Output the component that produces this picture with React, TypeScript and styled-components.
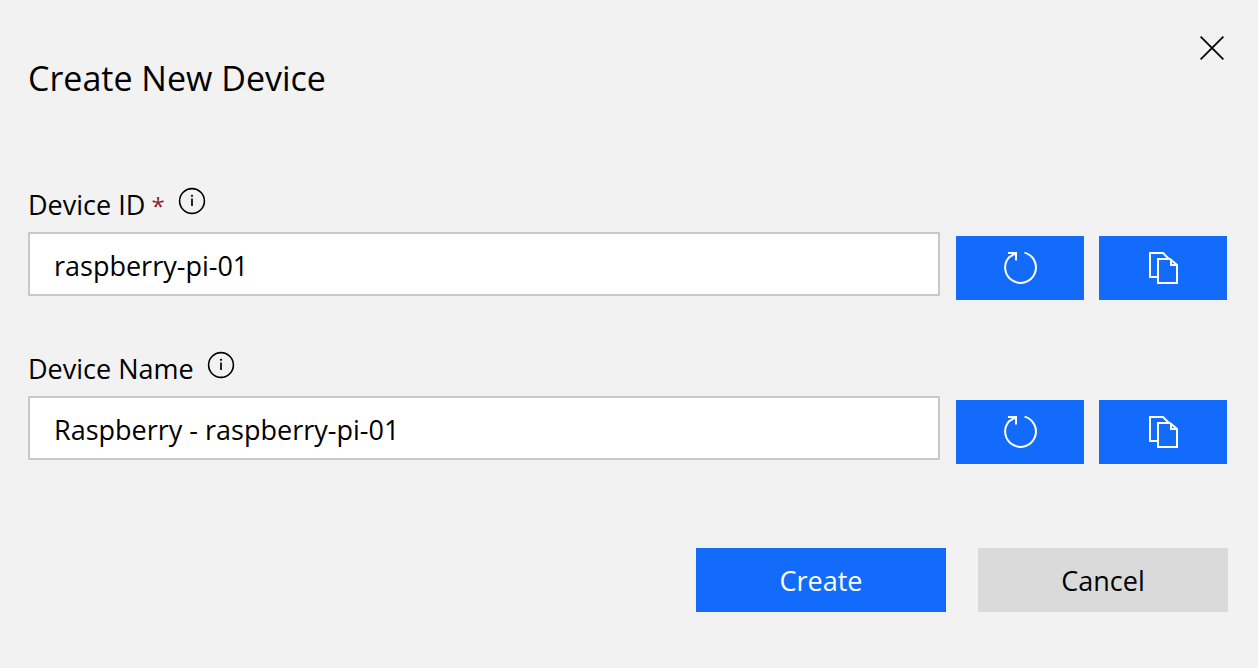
import React, { useState } from "react";
import styled, { createGlobalStyle } from "styled-components";

const GlobalStyle = createGlobalStyle`
  *, *::before, *::after { box-sizing: border-box; }
  body {
    margin: 0;
    background: #f2f2f2;
    color: #000;
    font-family: "Segoe UI", "Open Sans", "Noto Sans", sans-serif;
  }
`;

const Panel = styled.form`
  min-height: 100vh;
  padding: 28px 30px 56px 28px;
  background: #f2f2f2;
`;

const Header = styled.header`
  display: flex;
  justify-content: space-between;
  align-items: flex-start;
`;

const Title = styled.h1`
  margin: 26px 0 0;
  font-size: 34px;
  line-height: 48px;
  font-weight: 400;
`;

const PlainButton = styled.button`
  display: flex;
  align-items: center;
  justify-content: center;
  padding: 0;
  border: 0;
  background: none;
  color: inherit;
  cursor: pointer;
`;

const CloseButton = styled(PlainButton)`
  width: 32px;
  height: 40px;
`;

const Fields = styled.div`
  display: grid;
  gap: 48px;
  margin-top: 82px;
`;

const LabelRow = styled.div`
  display: flex;
  gap: 13px;
  height: 48px;
`;

const Label = styled.label`
  font-size: 27px;
  line-height: 42px;
`;

const Required = styled.span`
  color: #8e1a3a;
  font-size: 24px;
  line-height: 1;
`;

const InfoButton = styled(PlainButton)`
  width: 28px;
  height: 34px;
`;

const ControlRow = styled.div`
  display: flex;
  gap: 16px;
`;

const TextInput = styled.input`
  flex: 1;
  min-width: 0;
  height: 64px;
  padding: 2px 24px 0;
  border: 2px solid #c8c8c8;
  border-radius: 0;
  background: #fff;
  color: #000;
  font: inherit;
  font-size: 27px;
`;

const Actions = styled.div`
  display: flex;
  flex: 0 0 272px;
  gap: 15px;
  padding-top: 4px;
`;

const IconButton = styled(PlainButton)`
  width: 128px;
  height: 64px;
  background: #136bfb;
  color: #fff;
`;

const Footer = styled.footer`
  display: flex;
  justify-content: flex-end;
  gap: 32px;
  margin-top: 84px;
`;

const FooterButton = styled(PlainButton)<{ $primary?: boolean }>`
  width: 250px;
  height: 64px;
  background: ${({ $primary }) => ($primary ? "#136bfb" : "#dadada")};
  color: ${({ $primary }) => ($primary ? "#fff" : "#000")};
  font-family: inherit;
  font-size: 27px;
`;

const CloseIcon = () => (
  <svg width="24" height="24" viewBox="0 0 24 24" fill="none" stroke="currentColor" strokeWidth="1.8" aria-hidden="true">
    <path d="M.6.6 23.4 23.4M23.4.6.6 23.4" />
  </svg>
);

const InfoIcon = () => (
  <svg width="28" height="28" viewBox="0 0 28 28" fill="none" stroke="currentColor" aria-hidden="true">
    <circle cx="14" cy="14" r="12.4" strokeWidth="1.6" />
    <path d="M14 11.5v7.6" strokeWidth="1.7" />
    <circle cx="14" cy="8.8" r="1.1" fill="currentColor" stroke="none" />
  </svg>
);

const RefreshIcon = () => (
  <svg width="36" height="36" viewBox="0 0 36 36" fill="none" stroke="currentColor" strokeWidth="2" aria-hidden="true">
    <path d="M22.5 2.6A15.4 15.4 0 1 1 7 7.3L13.5 3.4" />
    <path d="M6 3h8v7.4" />
  </svg>
);

const CopyIcon = () => (
  <svg width="36" height="36" viewBox="0 0 36 36" fill="none" stroke="currentColor" strokeWidth="2" aria-hidden="true">
    <path d="M13 27H5V3h13l6 6" />
    <path d="M13 9h12l7 6v18H13z" />
    <path d="M26 9v6h6" />
  </svg>
);

type FieldProps = {
  id: string;
  label: string;
  required?: boolean;
  value: string;
  onChange: (value: string) => void;
  onReset: () => void;
};

function Field({ id, label, required, value, onChange, onReset }: FieldProps) {
  return (
    <div>
      <LabelRow>
        <Label htmlFor={id}>
          {label}
          {required && <Required> *</Required>}
        </Label>
        <InfoButton type="button" aria-label={`About ${label}`}>
          <InfoIcon />
        </InfoButton>
      </LabelRow>
      <ControlRow>
        <TextInput
          id={id}
          type="text"
          required={required}
          spellCheck={false}
          value={value}
          onChange={(e) => onChange(e.target.value)}
        />
        <Actions>
          <IconButton type="button" aria-label={`Regenerate ${label}`} onClick={onReset}>
            <RefreshIcon />
          </IconButton>
          <IconButton
            type="button"
            aria-label={`Copy ${label}`}
            onClick={() => navigator.clipboard?.writeText(value)}
          >
            <CopyIcon />
          </IconButton>
        </Actions>
      </ControlRow>
    </div>
  );
}

const DEFAULT_ID = "raspberry-pi-01";
const DEFAULT_NAME = "Raspberry - raspberry-pi-01";

export default function App() {
  const [deviceId, setDeviceId] = useState(DEFAULT_ID);
  const [deviceName, setDeviceName] = useState(DEFAULT_NAME);

  return (
    <>
      <GlobalStyle />
      <Panel onSubmit={(e) => e.preventDefault()}>
        <Header>
          <Title>Create New Device</Title>
          <CloseButton type="button" aria-label="Close">
            <CloseIcon />
          </CloseButton>
        </Header>
        <Fields>
          <Field
            id="device-id"
            label="Device ID"
            required
            value={deviceId}
            onChange={setDeviceId}
            onReset={() => setDeviceId(DEFAULT_ID)}
          />
          <Field
            id="device-name"
            label="Device Name"
            value={deviceName}
            onChange={setDeviceName}
            onReset={() => setDeviceName(DEFAULT_NAME)}
          />
        </Fields>
        <Footer>
          <FooterButton type="submit" $primary>
            Create
          </FooterButton>
          <FooterButton type="button">Cancel</FooterButton>
        </Footer>
      </Panel>
    </>
  );
}
